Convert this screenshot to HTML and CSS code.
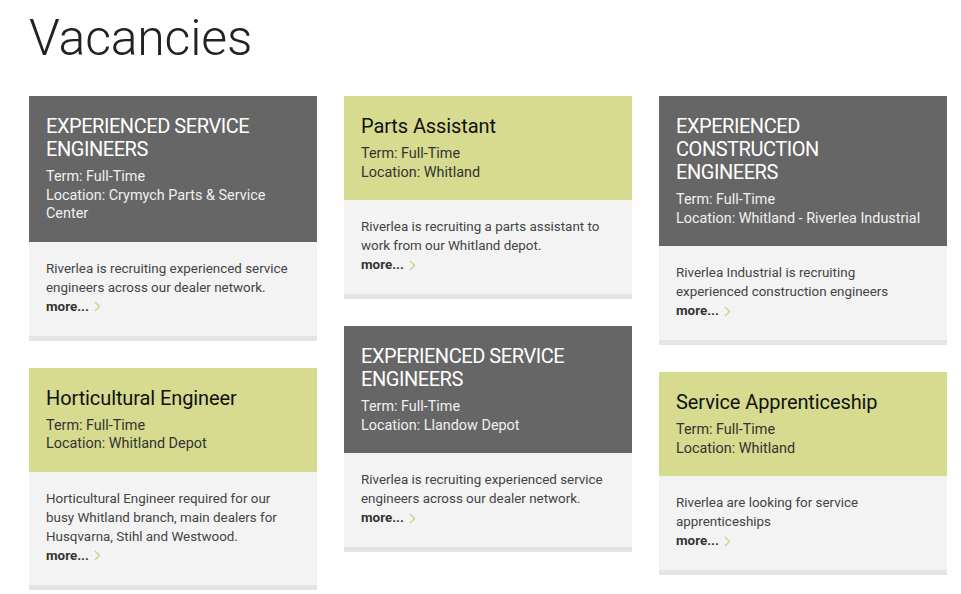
FILE: index.html
```html
<!DOCTYPE html>
<html lang="en">
<head>
<meta charset="utf-8">
<title>Vacancies</title>
<link rel="stylesheet" href="styles.css">
</head>
<body>
<div class="page">
  <h1 class="page-title">Vacancies</h1>
  <div class="grid">
    <div class="col">
      <div class="card">
        <div class="card-head dark">
          <h2 class="card-title">EXPERIENCED SERVICE ENGINEERS</h2>
          <div class="meta">Term: Full-Time</div>
          <div class="meta">Location: Crymych Parts &amp; Service Center</div>
        </div>
        <div class="card-body">
          <p class="desc">Riverlea is recruiting experienced service engineers across our dealer network.</p>
          <a class="more" href="#">more... <svg class="chev" width="7" height="11" viewBox="0 0 7 11"><polyline points="1,1 5.5,5.5 1,10" fill="none" stroke="#c9d27e" stroke-width="1.3"/></svg></a>
        </div>
      </div>
      <div class="card">
        <div class="card-head green">
          <h2 class="card-title">Horticultural Engineer</h2>
          <div class="meta">Term: Full-Time</div>
          <div class="meta">Location: Whitland Depot</div>
        </div>
        <div class="card-body">
          <p class="desc">Horticultural Engineer required for our busy Whitland branch, main dealers for Husqvarna, Stihl and Westwood.</p>
          <a class="more" href="#">more... <svg class="chev" width="7" height="11" viewBox="0 0 7 11"><polyline points="1,1 5.5,5.5 1,10" fill="none" stroke="#c9d27e" stroke-width="1.3"/></svg></a>
        </div>
      </div>
    </div>
    <div class="col">
      <div class="card">
        <div class="card-head green">
          <h2 class="card-title">Parts Assistant</h2>
          <div class="meta">Term: Full-Time</div>
          <div class="meta">Location: Whitland</div>
        </div>
        <div class="card-body">
          <p class="desc">Riverlea is recruiting a parts assistant to work from our Whitland depot.</p>
          <a class="more" href="#">more... <svg class="chev" width="7" height="11" viewBox="0 0 7 11"><polyline points="1,1 5.5,5.5 1,10" fill="none" stroke="#c9d27e" stroke-width="1.3"/></svg></a>
        </div>
      </div>
      <div class="card">
        <div class="card-head dark">
          <h2 class="card-title">EXPERIENCED SERVICE ENGINEERS</h2>
          <div class="meta">Term: Full-Time</div>
          <div class="meta">Location: Llandow Depot</div>
        </div>
        <div class="card-body">
          <p class="desc">Riverlea is recruiting experienced service engineers across our dealer network.</p>
          <a class="more" href="#">more... <svg class="chev" width="7" height="11" viewBox="0 0 7 11"><polyline points="1,1 5.5,5.5 1,10" fill="none" stroke="#c9d27e" stroke-width="1.3"/></svg></a>
        </div>
      </div>
    </div>
    <div class="col">
      <div class="card">
        <div class="card-head dark">
          <h2 class="card-title narrow">EXPERIENCED CONSTRUCTION ENGINEERS</h2>
          <div class="meta">Term: Full-Time</div>
          <div class="meta">Location: Whitland - Riverlea Industrial</div>
        </div>
        <div class="card-body">
          <p class="desc">Riverlea Industrial is recruiting experienced construction engineers</p>
          <a class="more" href="#">more... <svg class="chev" width="7" height="11" viewBox="0 0 7 11"><polyline points="1,1 5.5,5.5 1,10" fill="none" stroke="#c9d27e" stroke-width="1.3"/></svg></a>
        </div>
      </div>
      <div class="card">
        <div class="card-head green">
          <h2 class="card-title">Service Apprenticeship</h2>
          <div class="meta">Term: Full-Time</div>
          <div class="meta">Location: Whitland</div>
        </div>
        <div class="card-body">
          <p class="desc">Riverlea are looking for service apprenticeships</p>
          <a class="more" href="#">more... <svg class="chev" width="7" height="11" viewBox="0 0 7 11"><polyline points="1,1 5.5,5.5 1,10" fill="none" stroke="#c9d27e" stroke-width="1.3"/></svg></a>
        </div>
      </div>
    </div>
  </div>
</div>
</body>
</html>
```

FILE: styles.css
```css
* { box-sizing: border-box; }
html, body { margin: 0; padding: 0; background: #fff; }
body { font-family: Roboto, "Liberation Sans", sans-serif; color: #444; }
.page { padding: 13px 0 0 29px; }
.page-title {
  margin: 0;
  font-family: Roboto, sans-serif;
  font-weight: 300;
  font-size: 50px;
  line-height: 50px;
  color: #222;
  letter-spacing: -0.2px;
}
.grid {
  display: flex;
  gap: 27px;
  margin-top: 33px;
  align-items: flex-start;
}
.col {
  width: 288px;
  display: flex;
  flex-direction: column;
  gap: 27px;
}
.card {
  background: #f3f3f3;
  border-bottom: 5px solid #e4e4e4;
}
.card-head { padding: 19px 17px 18px 17px; }
.card-head.dark { background: #666666; color: #f0f0f0; }
.card-head.green { background: #d6db8f; color: #333; }
.card-title {
  margin: 0 0 7px 0;
  font-size: 20px;
  line-height: 23px;
  font-weight: 400;
}
.dark .card-title { color: #fff; letter-spacing: -0.45px; }
.green .card-title { color: #111; letter-spacing: -0.1px; }
.card-title.narrow { max-width: 200px; }
.meta { font-size: 14.4px; line-height: 18.5px; }
.card-body { padding: 17px 17px 20px 17px; }
.desc { margin: 0; font-size: 13.4px; line-height: 19px; color: #444; }
.more {
  display: flex;
  align-items: center;
  gap: 5px;
  font-size: 13.4px;
  line-height: 19px;
  font-weight: 700;
  color: #333;
  text-decoration: none;
}
.chev { display: block; margin-top: 1px; }
```
